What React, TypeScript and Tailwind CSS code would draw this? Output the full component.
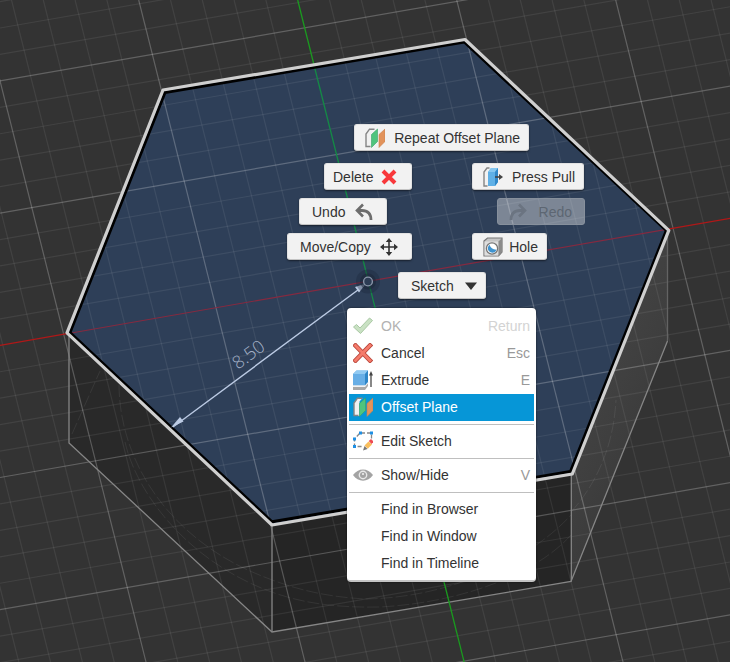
import type { ReactNode } from "react";
import clsx from "clsx";

const INK = "#6d6d6d";

// Direction of the two sketch axes on screen, in px per px
const X_SLOPE = -0.174;
const Y_SLOPE = 0.2512;
const REACH = 3000;

const steps = Array.from({ length: 161 }, (_, i) => i - 60);

function Grid() {
  return (
    <g stroke="#fff">
      {steps.map((n) => {
        if (n === 0) return null;
        const x = 297.7 + n * 31.8;
        const y = 345.3 + n * 26.44;
        const opacity = n % 5 === 0 ? 0.23 : 0.075;
        return (
          <g key={n} strokeOpacity={opacity} strokeWidth="1.2">
            <line x1={x} y1={0} x2={x + REACH * Y_SLOPE} y2={REACH} />
            <line x1={0} y1={y} x2={REACH} y2={y + REACH * X_SLOPE} />
          </g>
        );
      })}
    </g>
  );
}

function Viewport() {
  return (
    <svg className="absolute inset-0 h-full w-full" aria-hidden="true">
      <defs>
        <linearGradient id="sideFace" x1="0" y1="0" x2="0.6" y2="1">
          <stop offset="0" stopColor="#4a4a4a" />
          <stop offset="0.6" stopColor="#3f3f3f" />
          <stop offset="1" stopColor="#363636" />
        </linearGradient>
      </defs>

      {/* prism sides */}
      <polygon points="69,334 272,525 272,632 69,443" fill="#292929" />
      <polygon points="272,525 571,474 571,582 272,632" fill="#252525" />
      <polygon points="571,474 667,230 667,341 571,582" fill="url(#sideFace)" />
      <polygon
        points="163,90 465,40 668,230 572,474 272,525 68,333"
        fill="#2e3f58"
      />
      <Grid />

      {/* hidden edges */}
      <g fill="none" stroke="#fff" strokeOpacity="0.07" strokeDasharray="12 3">
        <path d="M119 385C120 470 178 545 267 578C300 591 330 597 365 599C450 598 530 560 571 515" />
        <path d="M125 442C136 490 180 550 250 583C290 602 330 608 380 607C470 602 540 570 571 535" />
        <path d="M72 434L100 371" />
        <path d="M571 512C600 480 614 440 616 400" />
      </g>
      <g fill="none" stroke="#868686" strokeWidth="1.3">
        <path d="M69 334V443L272 632L571 581.5L667.5 341" />
        <path d="M272 526V632M571.3 475V581.5" />
        <path d="M667.5 232V341" stroke="#636363" />
      </g>

      {/* sketch axes */}
      <line x1="297.7" y1="0" x2="314" y2="65" stroke="#1a9a1f" strokeWidth="1.3" />
      <line x1="314" y1="65" x2="437" y2="554" stroke="#148a45" strokeWidth="1.3" />
      <line x1="437" y1="554" x2="1051.3" y2="3000" stroke="#1a9a1f" strokeWidth="1.3" />
      <line x1="0" y1="345.3" x2="67" y2="333.7" stroke="#b01818" strokeWidth="1.2" />
      <line x1="67" y1="333.7" x2="668" y2="229.1" stroke="#852a40" strokeWidth="1.1" />
      <line x1="668" y1="229.1" x2="3000" y2="-176.7" stroke="#b01818" strokeWidth="1.2" />

      {/* selected profile outline */}
      <g fill="none" strokeLinejoin="round">
        <polygon
          points="165,92.5 464.3,42 666.3,230.5 570.5,471.5 272,521.8 70,332.5"
          stroke="#000"
          strokeWidth="3"
        />
        <polygon
          points="163,90 465,39.5 668.8,230.3 572.3,474 272,525 67,332.8"
          stroke="#cfcfcf"
          strokeWidth="3.2"
        />
      </g>

      {/* radius dimension */}
      <line x1="173" y1="427" x2="364" y2="285.5" stroke="#bccbe4" strokeWidth="1.4" />
      <polygon points="171,427.5 180,417 183.5,421.5" fill="#bccbe4" />
      <polygon points="366,283.5 355,287 359,292.5" fill="#bccbe4" />
      <text
        transform="translate(238 370) rotate(-36.5)"
        fill="#a3b0c6"
        fontSize="18"
        fontWeight="300"
        fontFamily="'Open Sans', Lato, sans-serif"
      >
        8.50
      </text>

      <circle cx="368" cy="281.5" r="12" fill="#1b2638" fillOpacity="0.35" />
      <circle cx="368" cy="281.5" r="8" fill="#1b2638" fillOpacity="0.5" />
      <circle cx="368" cy="281.5" r="4.4" fill="#2c3c54" stroke="#8995a8" strokeWidth="1.4" />
    </svg>
  );
}

function Icon({ children }: { children?: ReactNode }) {
  return (
    <svg
      className="size-5 shrink-0"
      viewBox="0 0 20 20"
      fill="none"
      aria-hidden="true"
    >
      {children}
    </svg>
  );
}

function OffsetPlaneIcon() {
  return (
    <Icon>
      <path d="M1 19V6L5 1H9.5L6.5 4.5V19Z" fill="#f1f1f1" />
      <path d="M5.5 18.5H1V6L4.5 1.2H9.5" stroke="#858585" strokeWidth="1.4" />
      <path d="M6.5 6.5L12.5 1V13.5L6.5 19.5Z" fill="#4fc47d" stroke="#37a364" strokeWidth="0.6" />
      <path d="M14 6.5L20 1V13.5L14 19.5Z" fill="#e2935b" stroke="#c9804d" strokeWidth="0.6" />
    </Icon>
  );
}

function PressPullIcon() {
  return (
    <Icon>
      <path d="M4.5 19H1V5L4 1H6.5" stroke="#858585" strokeWidth="1.4" />
      <path d="M5 5L8 1H15V15L12 19H5Z" fill="#5fb0e6" />
      <path d="M5 5L8 1H15L12 5Z" fill="#85c7f0" />
      <path d="M12 5L15 1V15L12 19Z" fill="#3189ca" />
      <path d="M12 10H17" stroke="#444" strokeWidth="1.6" />
      <path d="M16 7L20 10L16 13Z" fill="#444" />
    </Icon>
  );
}

function HoleIcon() {
  return (
    <Icon>
      <path d="M1 4L4.5 1H19V15L15.5 19H1Z" fill="#c6c6c6" stroke="#777" strokeWidth="1.2" />
      <path d="M1.5 4.5H15.5V18.5H1.5Z" fill="#dedede" />
      <path d="M15.5 4.5L19 1V15L15.5 19Z" fill="#8b8b8b" />
      <circle cx="9" cy="11.5" r="5.6" fill="#fff" stroke="#777" strokeWidth="1.3" />
      <path d="M6.5 7.8C7.5 10.5 9.5 12.5 13.5 12.8C12.5 15.5 9.8 16.3 7.5 15.3C4.3 13.8 4 10 6.5 7.8Z" fill="#3f93cf" />
    </Icon>
  );
}

function DeleteIcon() {
  return (
    <Icon>
      <path d="M4 4L16 16M16 4L4 16" stroke="#f8383b" strokeWidth="4" />
    </Icon>
  );
}

function UndoIcon() {
  return (
    <Icon>
      <path d="M3 8.5H8C13.5 8.5 17 11.5 17 18" stroke={INK} strokeWidth="2.8" />
      <path d="M9 2.5L3 8.5L9 14.5" stroke={INK} strokeWidth="2.6" />
    </Icon>
  );
}

function RedoIcon() {
  return (
    <Icon>
      <path d="M17 8.5H12C6.5 8.5 3 11.5 3 18" stroke="#6b7481" strokeWidth="2.8" />
      <path d="M11 2.5L17 8.5L11 14.5" stroke="#6b7481" strokeWidth="2.6" />
    </Icon>
  );
}

function MoveIcon() {
  return (
    <Icon>
      <path d="M10 3V17M3 10H17" stroke="#333" strokeWidth="1.6" />
      <path
        d="M10 1L13.2 5H6.8ZM10 19L13.2 15H6.8ZM1 10L5 6.8V13.2ZM19 10L15 6.8V13.2Z"
        fill="#333"
      />
    </Icon>
  );
}

function CheckIcon() {
  return (
    <Icon>
      <path
        d="M0.5 11L3.5 8.5L7 12L16.5 2L19.5 4.5L7.5 17.5Z"
        fill="#c9e1c3"
        stroke="#a9c8a4"
        strokeLinejoin="round"
      />
    </Icon>
  );
}

function CancelIcon() {
  return (
    <Icon>
      <path d="M2.5 2.5L17 17.5M17 2.5L2.5 17.5" stroke="#b9473c" strokeWidth="4.6" strokeLinecap="square" />
      <path d="M2.5 2.5L17 17.5M17 2.5L2.5 17.5" stroke="#f57b6b" strokeWidth="2.8" strokeLinecap="square" />
    </Icon>
  );
}

function ExtrudeIcon() {
  return (
    <Icon>
      <path d="M0 17H12L15 13.5V16L12 20H0Z" fill="#a8a8a8" />
      <path d="M0 4L3.5 0.5H15V12L12 15.5H0Z" fill="#67aee6" />
      <path d="M0 4L3.5 0.5H15L12 4Z" fill="#91caf2" />
      <path d="M12 4L15 0.5V12L12 15.5Z" fill="#2e86c8" />
      <path d="M0 16H12L15 12.5" stroke="#e7e7e7" />
      <path d="M18 4V17" stroke="#555" strokeWidth="1.4" />
      <path d="M16 5.5L18 1L20 5.5Z" fill="#444" />
    </Icon>
  );
}

function EditSketchIcon() {
  return (
    <Icon>
      <path d="M8 2H18.5V10M6.5 2.5L1.5 8V15.5H10" stroke="#888" strokeWidth="1.3" strokeDasharray="4 2" />
      <path d="M6 0.5H9V3.5H6ZM17 0.5H20V3.5H17ZM0 6.5H3V9.5H0ZM0 14H3V17H0Z" fill="#1f8fe3" />
      <path d="M11.5 14.5L15.5 10.5L19 13.5L14.8 17.8Z" fill="#f9be5d" />
      <path d="M15.8 10L18 8L20.5 10.5L18.5 13Z" fill="#ee4b52" />
      <path d="M11.5 15L14.5 18L10 19.5Z" fill="#777" />
    </Icon>
  );
}

function EyeIcon() {
  return (
    <Icon>
      <path d="M0 10C5 2.5 15 2.5 20 10C15 17.5 5 17.5 0 10Z" fill="#a3a3a3" />
      <circle cx="10" cy="10" r="4.4" fill="#e8e8e8" />
      <circle cx="10" cy="10" r="3" fill="#a3a3a3" />
      <circle cx="10" cy="9" r="1.1" fill="#eee" />
    </Icon>
  );
}

interface MarkingButtonProps {
  label: string;
  className: string;
  icon: ReactNode;
  iconAfter?: boolean;
  disabled?: boolean;
}

function MarkingButton({
  label,
  className,
  icon,
  iconAfter,
  disabled,
}: MarkingButtonProps) {
  return (
    <button
      type="button"
      disabled={disabled}
      className={clsx(
        "absolute flex h-[27px] items-center justify-between rounded-[3px] border whitespace-nowrap",
        iconAfter ? "flex-row-reverse" : "flex-row",
        disabled
          ? "border-[#87909c] bg-[#f2f2f2]/40 text-[#5d6672]"
          : "border-[#e2e2e2] border-b-[#c4c4c4] bg-[#f2f2f2] text-[#333] shadow-[0_1px_2px_rgba(0,0,0,0.5)]",
        className,
      )}
    >
      {icon}
      <span>{label}</span>
    </button>
  );
}

interface MenuEntry {
  label: string;
  shortcut?: string;
  icon?: ReactNode;
  disabled?: boolean;
  active?: boolean;
}

const menuGroups: MenuEntry[][] = [
  [
    { label: "OK", shortcut: "Return", icon: <CheckIcon />, disabled: true },
    { label: "Cancel", shortcut: "Esc", icon: <CancelIcon /> },
    { label: "Extrude", shortcut: "E", icon: <ExtrudeIcon /> },
    { label: "Offset Plane", icon: <OffsetPlaneIcon />, active: true },
  ],
  [{ label: "Edit Sketch", icon: <EditSketchIcon /> }],
  [{ label: "Show/Hide", shortcut: "V", icon: <EyeIcon /> }],
  [
    { label: "Find in Browser" },
    { label: "Find in Window" },
    { label: "Find in Timeline" },
  ],
];

function MenuItem({ label, shortcut, icon, disabled, active }: MenuEntry) {
  return (
    <button
      type="button"
      role="menuitem"
      disabled={disabled}
      className={clsx(
        "flex h-[27px] w-full items-center gap-2 px-1 pb-0.5 text-left",
        active && "bg-[#0696d7] text-white",
        disabled && "text-[#b2b2b2]",
        !active && !disabled && "text-[#333]",
      )}
    >
      {icon ?? <Icon />}
      <span className="grow">{label}</span>
      {shortcut && (
        <span className={disabled ? "text-[#d3d3d3]" : "text-[#999]"}>
          {shortcut}
        </span>
      )}
    </button>
  );
}

function ContextMenu() {
  return (
    <div
      role="menu"
      className="absolute top-[308px] left-[347px] w-[189px] rounded-[4px] border-b-2 border-[#c4c4c4] bg-white px-0.5 pt-[5px] pb-[3px] shadow-[0_0_2px_rgba(0,0,0,0.7)]"
    >
      {menuGroups.map((group, i) => (
        <div key={group[0].label}>
          {i > 0 && <hr className="my-[3px] border-[#bfbfbf]" />}
          {group.map((entry) => (
            <MenuItem key={entry.label} {...entry} />
          ))}
        </div>
      ))}
    </div>
  );
}

export default function App() {
  return (
    <main className="relative min-h-screen overflow-hidden bg-[#333] font-['Liberation_Sans',Arial,sans-serif] text-sm">
      <Viewport />

      <MarkingButton
        label="Repeat Offset Plane"
        className="top-[124px] left-[354px] w-[175px] pr-2 pl-2.5"
        icon={<OffsetPlaneIcon />}
      />
      <MarkingButton
        label="Delete"
        className="top-[163px] left-[324px] w-[88px] pr-3 pl-2"
        icon={<DeleteIcon />}
        iconAfter
      />
      <MarkingButton
        label="Press Pull"
        className="top-[163px] left-[472px] w-28 pr-2 pl-2.5"
        icon={<PressPullIcon />}
      />
      <MarkingButton
        label="Undo"
        className="top-[198px] left-[299px] w-[88px] pr-3 pl-3"
        icon={<UndoIcon />}
        iconAfter
      />
      <MarkingButton
        label="Redo"
        className="top-[198px] left-[497px] w-[88px] pr-3 pl-2.5"
        icon={<RedoIcon />}
        disabled
      />
      <MarkingButton
        label="Move/Copy"
        className="top-[233px] left-[287px] w-[125px] pr-3 pl-3"
        icon={<MoveIcon />}
        iconAfter
      />
      <MarkingButton
        label="Hole"
        className="top-[233px] left-[472px] w-[75px] pr-2 pl-2.5"
        icon={<HoleIcon />}
      />
      <MarkingButton
        label="Sketch"
        className="top-[272px] left-[398px] w-[88px] pr-1 pl-3"
        icon={
          <Icon>
            <path d="M4 6.5H16L10 14Z" fill="#333" />
          </Icon>
        }
        iconAfter
      />

      <ContextMenu />
    </main>
  );
}
